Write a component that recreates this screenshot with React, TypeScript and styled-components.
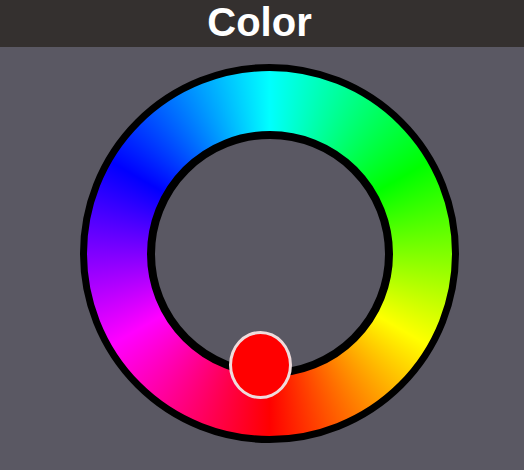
import React from "react";
import styled, { createGlobalStyle } from "styled-components";

const Global = createGlobalStyle`
  html, body {
    margin: 0;
    padding: 0;
    background: #5a5863;
    font-family: "Liberation Sans", Arial, sans-serif;
  }
  * { box-sizing: border-box; }
`;

const Page = styled.div`
  width: 524px;
  height: 470px;
  background: #5a5863;
  display: flex;
  flex-direction: column;
  overflow: hidden;
`;

const Header = styled.header`
  height: 47px;
  background: #34302f;
  display: flex;
  justify-content: center;
  align-items: flex-start;
  padding-right: 5px;
`;

const Title = styled.h1`
  margin: 0;
  font-family: "Liberation Sans", Arial, sans-serif;
  font-weight: 700;
  font-size: 40px;
  line-height: 44px;
  color: #ffffff;
`;

const Content = styled.main`
  flex: 1;
  display: flex;
  justify-content: flex-start;
  padding: 17px 0 0 80px;
`;

const Ring = styled.div<{ $size: number }>`
  position: relative;
  width: ${(p) => p.$size}px;
  height: ${(p) => p.$size}px;
  border-radius: 50%;
  border: 7px solid #000;
  background: conic-gradient(
    from 180deg,
    #ff0000 0deg,
    #ff00ff 60deg,
    #0000ff 120deg,
    #00ffff 180deg,
    #00ff00 240deg,
    #ffff00 300deg,
    #ff0000 360deg
  );
  display: flex;
  align-items: center;
  justify-content: center;
`;

const Hole = styled.div<{ $size: number }>`
  width: ${(p) => p.$size}px;
  height: ${(p) => p.$size}px;
  border-radius: 50%;
  border: 8px solid #000;
  background: #5a5863;
`;

const Knob = styled.div<{ $color: string }>`
  position: absolute;
  left: 142px;
  top: 260px;
  width: 63px;
  height: 68px;
  border-radius: 50%;
  background: ${(p) => p.$color};
  border: 3px solid #efdcdc;
`;

export default function App() {
  return (
    <>
      <Global />
      <Page>
        <Header>
          <Title>Color</Title>
        </Header>
        <Content>
          <Ring $size={379}>
            <Hole $size={246} />
            <Knob $color="#ff0000" />
          </Ring>
        </Content>
      </Page>
    </>
  );
}
